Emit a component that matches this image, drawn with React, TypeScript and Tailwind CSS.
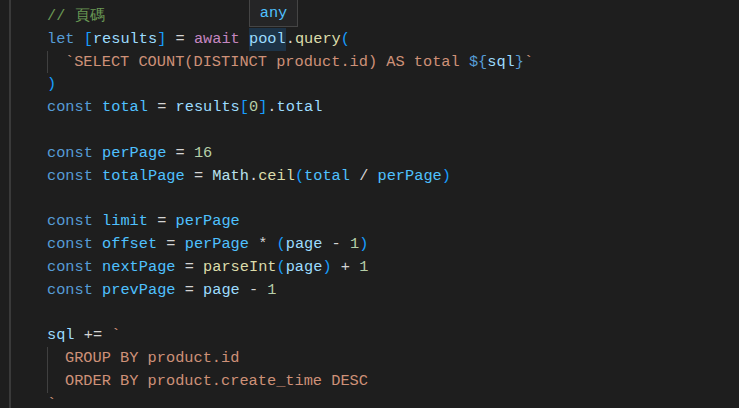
import React from "react";

type Tok = [string, string];

const KW = "text-[#569cd6]";
const AW = "text-[#c586c0]";
const VAR = "text-[#9cdcfe]";
const CST = "text-[#4fc1ff]";
const FN = "text-[#dcdcaa]";
const STR = "text-[#ce9178]";
const NUM = "text-[#b5cea8]";
const OP = "text-[#d4d4d4]";
const BR = "text-[#179fff]";
const CM = "text-[#6a9955]";
const TY = "text-[#b8e2ee]";

const lines: { indent?: boolean; toks: Tok[] }[] = [
  { toks: [["// 頁碼", CM]] },
  {
    toks: [
      ["let ", KW],
      ["[", BR],
      ["results", VAR],
      ["]", BR],
      [" = ", OP],
      ["await", AW],
      [" ", OP],
      ["pool", VAR + " hover"],
      [".", OP],
      ["query", FN],
      ["(", BR],
    ],
  },
  {
    indent: true,
    toks: [
      ["`SELECT COUNT(DISTINCT product.id) AS total ", STR],
      ["${", KW],
      ["sql", VAR],
      ["}", KW],
      ["`", STR],
    ],
  },
  { toks: [[")", BR]] },
  {
    toks: [
      ["const ", KW],
      ["total", CST],
      [" = ", OP],
      ["results", VAR],
      ["[", BR],
      ["0", NUM],
      ["]", BR],
      [".", OP],
      ["total", VAR],
    ],
  },
  { toks: [] },
  {
    toks: [
      ["const ", KW],
      ["perPage", CST],
      [" = ", OP],
      ["16", NUM],
    ],
  },
  {
    toks: [
      ["const ", KW],
      ["totalPage", CST],
      [" = ", OP],
      ["Math", TY],
      [".", OP],
      ["ceil", FN],
      ["(", BR],
      ["total", CST],
      [" / ", OP],
      ["perPage", CST],
      [")", BR],
    ],
  },
  { toks: [] },
  {
    toks: [
      ["const ", KW],
      ["limit", CST],
      [" = ", OP],
      ["perPage", CST],
    ],
  },
  {
    toks: [
      ["const ", KW],
      ["offset", CST],
      [" = ", OP],
      ["perPage", CST],
      [" * ", OP],
      ["(", BR],
      ["page", VAR],
      [" - ", OP],
      ["1", NUM],
      [")", BR],
    ],
  },
  {
    toks: [
      ["const ", KW],
      ["nextPage", CST],
      [" = ", OP],
      ["parseInt", FN],
      ["(", BR],
      ["page", VAR],
      [")", BR],
      [" + ", OP],
      ["1", NUM],
    ],
  },
  {
    toks: [
      ["const ", KW],
      ["prevPage", CST],
      [" = ", OP],
      ["page", VAR],
      [" - ", OP],
      ["1", NUM],
    ],
  },
  { toks: [] },
  {
    toks: [
      ["sql", VAR],
      [" += ", OP],
      ["`", STR],
    ],
  },
  { indent: true, toks: [["GROUP BY product.id", STR]] },
  { indent: true, toks: [["ORDER BY product.create_time DESC", STR]] },
  { toks: [["`", STR]] },
];

export default function App() {
  return (
    <div className="relative w-[739px] h-[408px] overflow-hidden bg-[#1e1e1e] font-['Liberation_Mono',monospace] text-[15.3px]">
      <div className="flex h-full">
        <div className="w-[9px] shrink-0" />
        <div className="w-[2px] shrink-0 bg-[#3a3a3a]" />
        <div className="pl-[36px] pt-[5px]">
          {lines.map((line, i) => (
            <div key={i} className="flex h-[22.8px] items-center whitespace-pre leading-[22.8px]">
              {line.indent && <span className="w-[1px] h-full bg-[#404040] mr-[17px]" />}
              {line.toks.map(([t, c], j) =>
                c.includes("hover") ? (
                  <span key={j} className={c.replace(" hover", "") + " bg-[#1d3347]"}>
                    {t}
                  </span>
                ) : (
                  <span key={j} className={c}>
                    {t}
                  </span>
                )
              )}
            </div>
          ))}
        </div>
      </div>
      <div className="absolute left-[249px] top-[-1px] flex h-[28px] w-[49px] items-center justify-center border border-[#454545] bg-[#252526] text-[#4fc1ff]">
        any
      </div>
    </div>
  );
}
